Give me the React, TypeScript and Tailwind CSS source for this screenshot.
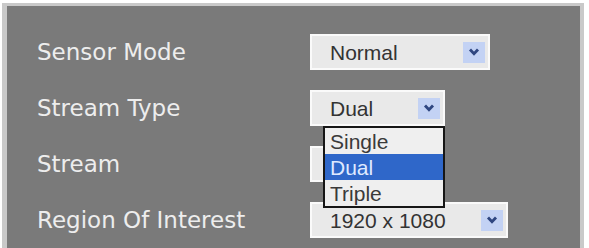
import React from 'react';

const labelFont = { fontFamily: '"DejaVu Sans", Verdana, sans-serif' };
const boxFont = { fontFamily: '"Liberation Sans", Arial, sans-serif' };

function Chevron() {
  return (
    <svg width="12" height="8" viewBox="0 0 12 8">
      <polyline points="2,1.5 6,5.8 10,1.5" fill="none" stroke="#2f4680" strokeWidth="2.8" />
    </svg>
  );
}

interface SelectBoxProps {
  value: string;
  width: string;
  children?: React.ReactNode;
}

function SelectBox({ value, width, children }: SelectBoxProps) {
  return (
    <div className={`relative ${width}`}>
      <div
        className="flex h-[36px] items-center justify-between border-2 border-[#fafafa] bg-[#e9e9e9] pl-[18px] pr-[3px] text-[21px] text-[#333333]"
        style={boxFont}
      >
        <span className="leading-none">{value}</span>
        <div className="flex h-[21px] w-[22px] items-center justify-center bg-[#c3d2f4]">
          <Chevron />
        </div>
      </div>
      {children}
    </div>
  );
}

const options = ['Single', 'Dual', 'Triple'];

export default function App() {
  return (
    <div className="h-[248px] w-[589px] overflow-hidden bg-white pl-[2px] pr-[5px] pt-[3px]">
      <div className="h-full border-l-[5px] border-r-[4px] border-t-[3px] border-[#c9c9c9]">
        <div className="flex h-full flex-col bg-[#7a7a7a] pl-[30px] pt-[18px]">
          <div className="flex h-[56px] items-center">
            <div className="w-[273px] text-[23px] text-[#ededed]" style={labelFont}>Sensor Mode</div>
            <SelectBox value="Normal" width="w-[180px]" />
          </div>
          <div className="flex h-[56px] items-center">
            <div className="w-[273px] text-[23px] text-[#ededed]" style={labelFont}>Stream Type</div>
            <div className="relative z-10">
              <SelectBox value="Dual" width="w-[135px]">
                <div
                  className="absolute left-[13px] top-full w-[122px] border-2 border-[#161616] bg-[#efefef] text-[21px]"
                  style={boxFont}
                >
                  {options.map((o) => (
                    <div
                      key={o}
                      className={`flex h-[26px] items-center pl-[5px] leading-none ${
                        o === 'Dual' ? 'bg-[#2f67c9] text-[#dfeaff]' : 'text-[#3a3a3a]'
                      }`}
                    >
                      {o}
                    </div>
                  ))}
                </div>
              </SelectBox>
            </div>
          </div>
          <div className="flex h-[56px] items-center">
            <div className="w-[273px] text-[23px] text-[#ededed]" style={labelFont}>Stream</div>
            <SelectBox value="" width="w-[130px]" />
          </div>
          <div className="flex h-[56px] items-center">
            <div className="w-[273px] text-[23px] text-[#ededed]" style={labelFont}>Region Of Interest</div>
            <SelectBox value="1920 x 1080" width="w-[198px]" />
          </div>
        </div>
      </div>
    </div>
  );
}
